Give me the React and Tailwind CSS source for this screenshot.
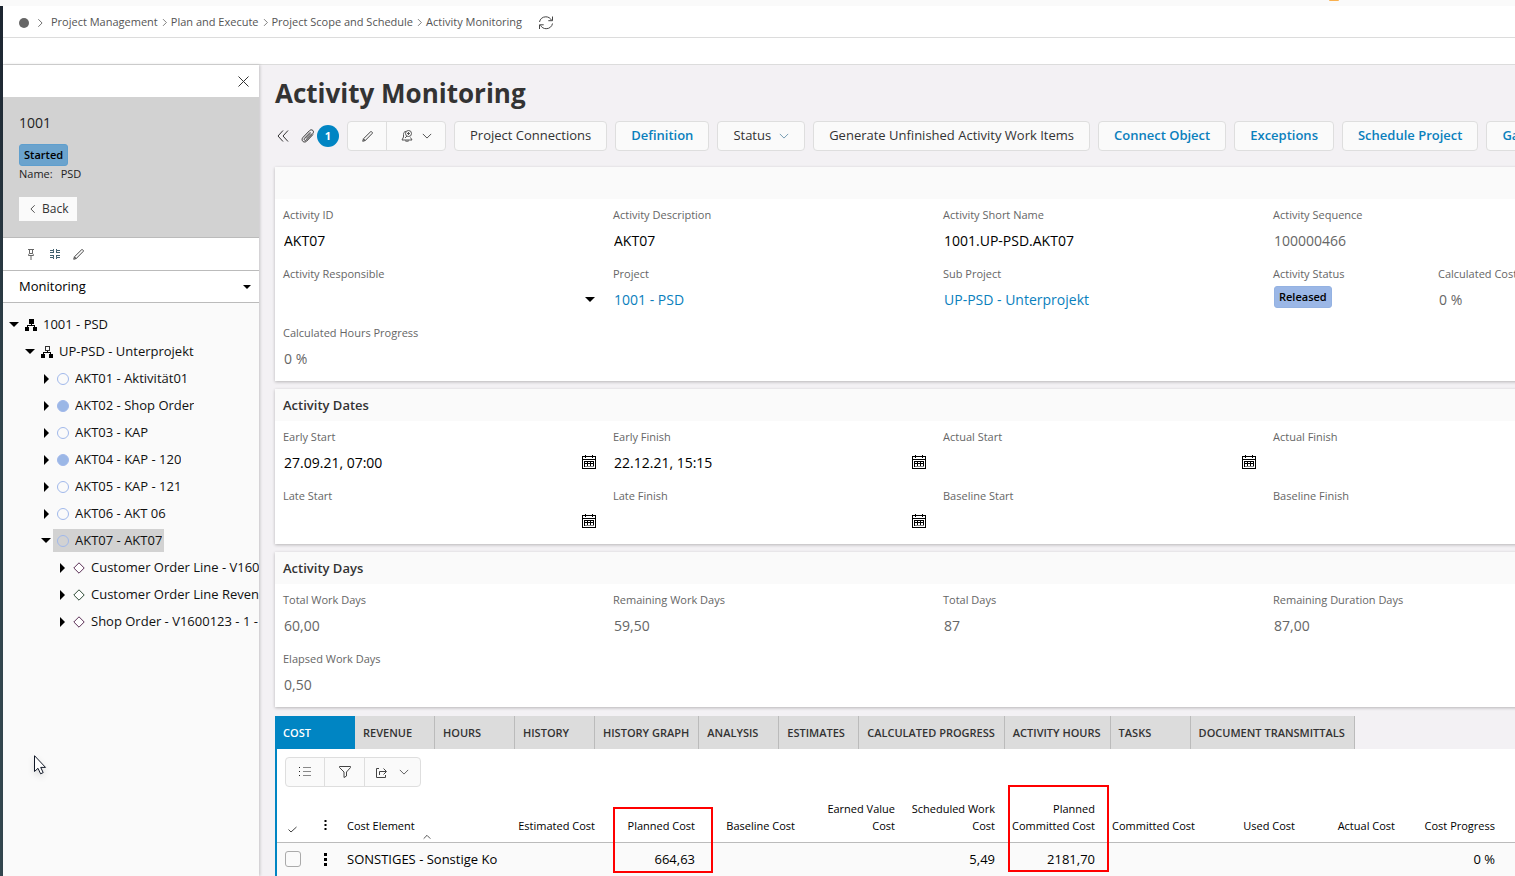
import React, { useState } from "react";

const TREE = [
  { level: 0, icon: "root", label: "1001 - PSD", open: true },
  { level: 1, icon: "sub", label: "UP-PSD - Unterprojekt", open: true },
  { level: 2, icon: "circle", label: "AKT01 - Aktivität01" },
  { level: 2, icon: "dot", label: "AKT02 - Shop Order" },
  { level: 2, icon: "circle", label: "AKT03 - KAP" },
  { level: 2, icon: "dot", label: "AKT04 - KAP - 120" },
  { level: 2, icon: "circle", label: "AKT05 - KAP - 121" },
  { level: 2, icon: "circle", label: "AKT06 - AKT 06" },
  { level: 2, icon: "circle", label: "AKT07 - AKT07", open: true },
  { level: 3, icon: "purple", label: "Customer Order Line - V1600" },
  { level: 3, icon: "green", label: "Customer Order Line Revenue" },
  { level: 3, icon: "purple", label: "Shop Order - V1600123 - 1 -" },
];

const INDENT = ["pl-[6px]", "pl-[22px]", "pl-[38px]", "pl-[54px]"];

const TABS = [
  "COST",
  "REVENUE",
  "HOURS",
  "HISTORY",
  "HISTORY GRAPH",
  "ANALYSIS",
  "ESTIMATES",
  "CALCULATED PROGRESS",
  "ACTIVITY HOURS",
  "TASKS",
  "DOCUMENT TRANSMITTALS",
];

const COLUMNS = [
  { name: "Estimated Cost", value: "" },
  { name: "Planned Cost", value: "664,63", mark: "top-5 h-[66px] left-2 w-[100px]" },
  { name: "Baseline Cost", value: "" },
  { name: "Earned Value Cost", value: "" },
  { name: "Scheduled Work Cost", value: "5,49" },
  { name: "Planned Committed Cost", value: "2181,70", mark: "-top-[2px] h-[87px] left-[3px] w-[101px]" },
  { name: "Committed Cost", value: "" },
  { name: "Used Cost", value: "" },
  { name: "Actual Cost", value: "" },
  { name: "Cost Progress", value: "0 %" },
];

function Chevron({ d, className }) {
  return (
    <svg className={className} viewBox="0 0 12 12" fill="none" stroke="currentColor" aria-hidden="true">
      <path d={d} />
    </svg>
  );
}

const DOWN = "M1 3.5l5 5 5-5";
const LEFT = "M8 1.5L3.5 6 8 10.500";
const RIGHT = "M4 1.500L8.500 6 4 10.500";
const UP = "M1 8.500l5-5 5 5";

function Caret({ open }) {
  return (
    <svg className="w-[10px] h-[10px] shrink-0" viewBox="0 0 10 10" fill="black" aria-hidden="true">
      {open ? <path d="M0 2h10L5 7z" /> : <path d="M3 0v10l5-5z" />}
    </svg>
  );
}

function Pencil({ className }) {
  return (
    <svg className={className} viewBox="0 0 12 12" fill="none" stroke="currentColor" aria-hidden="true">
      <path d="M.8 11.200l.8-2.700L9.300.9c.4-.4 1-.4 1.300 0l.5.5c.4.400.4.900 0 1.300L3.500 10.400zM1.600 8.500l1.900 1.900" />
    </svg>
  );
}

function CalendarIcon() {
  return (
    <svg className="w-[14px] h-[14px]" viewBox="0 0 14 14" fill="none" stroke="black" shapeRendering="crispEdges" aria-hidden="true">
      <path d="M.5 1.500h13v12H.5zM1 4.500h12M3.500 0v3M10.500 0v3M2.500 6.500h9v4.500h-9zM2 8.500h10M5.500 6v5M8.500 6v5" />
      <path d="M2.500 11.500h9" stroke="#888" />
    </svg>
  );
}

function TreeIcon({ type }) {
  if (type === "root" || type === "sub") {
    return (
      <svg className="w-3 h-3 shrink-0" viewBox="0 0 12 12" fill="black" shapeRendering="crispEdges" aria-hidden="true">
        {type === "root" ? <path d="M4 0h5v5H4z" /> : <path d="M4.500.5h4v4h-4z" fill="none" stroke="#333" />}
        <path d="M0 8h4v4H0zM8 8h4v4H8zM6 5h1v2H6zM2 6h8v1H2zM2 7h1v1H2zM9 7h1v1H9z" />
      </svg>
    );
  }
  if (type === "circle" || type === "dot") {
    return (
      <svg className="w-3 h-3 shrink-0" viewBox="0 0 12 12" stroke="#a0b8ea" fill={type === "dot" ? "#9bb7e6" : "none"} aria-hidden="true">
        <circle cx="6" cy="6" r="5.500" />
      </svg>
    );
  }
  return (
    <svg className="w-3 h-3 shrink-0" viewBox="0 0 12 12" fill="white" stroke={type === "green" ? "#2d4a35" : "#5b2f56"} aria-hidden="true">
      <path d="M6 .8L11.200 6 6 11.200.8 6z" />
    </svg>
  );
}

function Field({ label, id, children, half }) {
  return (
    <div className={`${half ? "" : "col-span-2"} h-[59px] px-2 pt-2`}>
      <label htmlFor={id} className="block h-4 leading-4 text-[11px] text-[#666] whitespace-nowrap">
        {label}
      </label>
      <div className="mt-1 h-[26px] pl-px flex items-center text-[14px] text-[#666]">{children}</div>
    </div>
  );
}

function TextField({ label, id, value = "", calendar }) {
  return (
    <Field label={label} id={id}>
      <input id={id} defaultValue={value} className="flex-1 min-w-0 h-6 bg-transparent text-black outline-none" />
      {calendar && (
        <button type="button" aria-label={`Pick ${label}`} className="mr-px">
          <CalendarIcon />
        </button>
      )}
    </Field>
  );
}

function ReadField({ label, id, value, half }) {
  return (
    <Field label={label} id={id} half={half}>
      <output id={id}>{value}</output>
    </Field>
  );
}

function Card({ title, children }) {
  return (
    <section className="bg-white shadow-[0_1px_3px_rgba(0,0,0,0.25)]">
      <h2 className="h-8 px-2 bg-[#fafafa] text-[13px] leading-8 font-semibold text-[#333]">{title}</h2>
      <div className="grid grid-cols-[repeat(8,165px)] pb-[5px]">{children}</div>
    </section>
  );
}

function ToolButton({ children, link }) {
  return (
    <button
      type="button"
      className={`h-[30px] px-[15px] shrink-0 flex items-center gap-2 rounded border border-[#dedede] bg-[#fafafa] text-[13px] whitespace-nowrap ${
        link ? "font-semibold text-[#0a80bd]" : "text-[#333]"
      }`}
    >
      {children}
    </button>
  );
}

function Sidebar() {
  const [selected, setSelected] = useState("AKT07 - AKT07");

  return (
    <aside className="relative z-10 w-64 shrink-0 overflow-hidden bg-[#fafafa] shadow-[1px_0_3px_rgba(0,0,0,0.2)]">
      <div className="h-8 bg-white flex items-center justify-end pr-[10px]">
        <button type="button" aria-label="Close">
          <svg className="w-[11px] h-[11px]" viewBox="0 0 11 11" stroke="#333" aria-hidden="true">
            <path d="M.5.5l10 10M10.500.5l-10 10" />
          </svg>
        </button>
      </div>
      <div className="bg-[#d2d2d2] border-b border-[#bbb] px-4 py-4 text-[#222]">
        <div className="h-5 leading-5 text-[14px]">1001</div>
        <div className="mt-[11px] flex">
          <span className="h-[22px] px-1 rounded-[3px] border border-[#5f9fce] bg-[#6ba3cd] text-[11px] leading-5 font-semibold text-black">
            Started
          </span>
        </div>
        <div className="h-4 leading-4 text-[11px] flex gap-2">
          <span>Name:</span>
          <span>PSD</span>
        </div>
        <button type="button" className="mt-[15px] h-6 px-[9px] bg-[#fafafa] flex items-center gap-1 text-[12px] text-[#333]">
          <Chevron d={LEFT} className="w-[10px] h-[10px]" />
          Back
        </button>
      </div>
      <div className="h-[33px] bg-white border-b border-[#bbb] flex items-center gap-3 pl-[22px] text-[#333]">
        <button type="button" aria-label="Pin">
          <svg className="w-3 h-3" viewBox="0 0 12 12" fill="none" stroke="#666" aria-hidden="true">
            <path d="M3 1.500h6M4.500 1.500v4M7.500 1.500v4M3.500 7.500c0-1 .5-2 1-2h3c.5 0 1 1 1 2zM6 7.500V12" />
          </svg>
        </button>
        <button type="button" aria-label="Collapse">
          <svg className="w-3 h-3" viewBox="0 0 12 12" fill="none" stroke="#41606f" aria-hidden="true">
            <path d="M1 2.500h3.500V5M11 2.500H7.500V5M1 9.500h3.500V7M11 9.500H7.500V7M4.500 2.500V1M7.500 2.500V1M4.500 9.500V11M7.500 9.500V11M1 4.500h3.500M7.500 4.500H11M1 7.500h3.500M7.500 7.500H11" />
          </svg>
        </button>
        <button type="button" aria-label="Edit">
          <Pencil className="w-[11px] h-[11px]" />
        </button>
      </div>
      <div className="relative h-8 bg-white border-b border-[#bbb]">
        <select aria-label="View" className="w-full h-full pl-4 appearance-none bg-transparent text-[13px] text-black outline-none">
          <option>Monitoring</option>
        </select>
        <svg className="absolute right-2 top-[13px] w-2 h-[6px] pointer-events-none" viewBox="0 0 8 6" aria-hidden="true">
          <path d="M0 1h8L4 5z" />
        </svg>
      </div>
      <ul className="pt-2">
        {TREE.map((node) => (
          <li key={node.label} className={`${INDENT[node.level]} h-[27px] flex items-center gap-[2px]`}>
            <Caret open={node.open} />
            <button
              type="button"
              onClick={() => setSelected(node.label)}
              className={`h-[23px] min-w-0 pl-1 flex items-center gap-[6px] text-[13px] text-[#111] ${
                selected === node.label ? "bg-[#d2d2d2] pr-[2px]" : ""
              }`}
            >
              <TreeIcon type={node.icon} />
              <span className="min-w-0 overflow-hidden whitespace-nowrap">{node.label}</span>
            </button>
          </li>
        ))}
      </ul>
      {/* mouse pointer */}
      <svg className="absolute left-[31px] top-[690px] w-[14px] h-5 drop-shadow-md" viewBox="0 0 14 20" fill="white" stroke="#111827" aria-hidden="true">
        <path d="M.5.7v15.800l3.500-3.200 2.600 5.500 2.600-1.200-2.500-5.200h4.800z" />
      </svg>
    </aside>
  );
}

function Toolbar() {
  return (
    <div className="mt-[10px] flex items-center gap-2 text-[#333]">
      <div className="w-16 shrink-0 flex items-center">
        <button type="button" aria-label="Collapse header" className="ml-[2px]">
          <svg className="w-3 h-3" viewBox="0 0 12 12" fill="none" stroke="currentColor" aria-hidden="true">
            <path d="M6 .5L1 6l5 5.500M11 .5L6 6l5 5.500" />
          </svg>
        </button>
        <button type="button" aria-label="Attachments" className="ml-3 flex items-center gap-[2px]">
          <svg className="w-[14px] h-[14px]" viewBox="0 0 14 14" fill="none" stroke="currentColor" aria-hidden="true">
            <path d="M12 5.500l-6.300 6.600c-1.100 1.100-2.800 1.200-3.900.2-1-1.100-.9-2.700.1-3.800L8.600 1.600c.9-.9 2.300-1 3.200-.2.9.9.8 2.200 0 3.100L5.400 11c-.6.6-1.400.6-1.900.1s-.4-1.300.1-1.900l5.800-6" />
            <path d="M5 9.600l5-5.200" />
          </svg>
          <span className="size-[22px] rounded-full bg-[#0085c3] text-white text-[11px] leading-[22px] font-bold text-center">1</span>
        </button>
      </div>
      <div className="h-[30px] shrink-0 flex rounded border border-[#dedede] bg-[#fafafa]">
        <button type="button" aria-label="Edit" className="w-[39px] flex items-center justify-center border-r border-[#dedede]">
          <Pencil className="w-[11px] h-[11px]" />
        </button>
        <button type="button" aria-label="Notifications" className="w-[58px] flex items-center justify-center gap-[9px]">
          <svg className="w-3 h-3" viewBox="0 0 12 12" fill="none" stroke="#555" aria-hidden="true">
            <path d="M5 1.500c-2 0-2.500 1.500-2.500 3v2.500L1 10h10L9.500 7.500M4 10.500c.5 1 3.500 1 4 0" />
            <circle cx="7.500" cy="3.500" r="3" />
            <path d="M7.500 2v3M6 3.500h3M4 8l2-2" />
          </svg>
          <Chevron d={DOWN} className="w-[10px] h-[10px]" />
        </button>
      </div>
      <ToolButton>Project Connections</ToolButton>
      <ToolButton link>Definition</ToolButton>
      <ToolButton>
        Status
        <Chevron d={DOWN} className="w-[10px] h-[10px] text-[#5b8aa5]" />
      </ToolButton>
      <ToolButton>Generate Unfinished Activity Work Items</ToolButton>
      <ToolButton link>Connect Object</ToolButton>
      <ToolButton link>Exceptions</ToolButton>
      <ToolButton link>Schedule Project</ToolButton>
      <ToolButton link>Gantt</ToolButton>
    </div>
  );
}

function CostTable() {
  return (
    <div className="flex-1 bg-white border-l-2 border-[#0085c3]">
      <div className="pt-2 pl-2">
        <div className="flex w-fit h-[30px] rounded border border-[#dedede] bg-[#fafafa] text-[#444]">
          <button type="button" aria-label="List view" className="w-[39px] flex items-center justify-center border-r border-[#dedede]">
            <svg className="w-3 h-3" viewBox="0 0 12 12" shapeRendering="crispEdges" aria-hidden="true">
              <path d="M0 1h1v1H0zM0 5h1v1H0zM0 9h1v1H0z" fill="#222" />
              <path d="M4 1.500h8M4 5.500h8M4 9.500h8" stroke="#888" />
            </svg>
          </button>
          <button type="button" aria-label="Filter" className="w-10 flex items-center justify-center border-r border-[#dedede]">
            <svg className="w-3 h-3" viewBox="0 0 12 12" fill="none" stroke="currentColor" aria-hidden="true">
              <path d="M.5.5h11v1L7.500 6v4L5 11.500V6L.5 1.500z" />
            </svg>
          </button>
          <button type="button" aria-label="Export" className="w-[55px] flex items-center justify-center gap-3">
            <svg className="w-[11px] h-[11px]" viewBox="0 0 11 11" fill="none" stroke="currentColor" aria-hidden="true">
              <path d="M3 1.500H.5v9h9V8M3.500 8V4.500H10M7.500 1.500l3 3-3 3" />
            </svg>
            <Chevron d={DOWN} className="w-[10px] h-[10px]" />
          </button>
        </div>
      </div>
      <table className="w-full table-fixed text-black">
        <colgroup>
          <col className="w-8" />
          <col className="w-8" />
          <col className="w-[164px]" />
          {COLUMNS.map((col) => (
            <col key={col.name} className="w-[100px]" />
          ))}
          <col />
        </colgroup>
        <thead>
          <tr className="h-[55px] border-b border-[#bbb] text-[11px] leading-[17px]">
            <th className="align-bottom pl-[11px] pb-[9px]">
              <svg className="w-[9px] h-[9px]" viewBox="0 0 9 9" fill="none" stroke="#444" aria-label="Select">
                <path d="M.5 5.500L3 8l5.500-5" />
              </svg>
            </th>
            <th className="align-bottom pb-3">
              <svg className="mx-auto w-[3px] h-[10px]" viewBox="0 0 3 10" aria-label="Actions">
                <path d="M.5 0h2v2h-2zM.5 4h2v2h-2zM.5 8h2v2h-2z" />
              </svg>
            </th>
            <th className="relative align-bottom text-left font-normal pl-[6px] pb-2">
              Cost Element
              <Chevron d={UP} className="absolute left-[82px] bottom-px w-2 h-2" />
            </th>
            {COLUMNS.map((col) => (
              <th key={col.name} className="relative align-bottom text-right font-normal pl-1 pr-[10px] pb-2">
                {col.name}
                {col.mark && <span className={`absolute z-10 border-2 border-[#f00] pointer-events-none ${col.mark}`} />}
              </th>
            ))}
            <th />
          </tr>
        </thead>
        <tbody>
          <tr className="h-[34px] bg-[#fafafa] text-[13px]">
            <td className="pl-2">
              <input
                type="checkbox"
                aria-label="Select SONSTIGES"
                className="block size-4 appearance-none rounded-[3px] border border-[#aaa] bg-[#fafafa]"
              />
            </td>
            <td>
              <button type="button" aria-label="Row actions" className="block mx-auto">
                <svg className="w-[3px] h-[13px]" viewBox="0 0 3 13" aria-hidden="true">
                  <path d="M0 0h3v3H0zM0 5h3v3H0zM0 10h3v3H0z" />
                </svg>
              </button>
            </td>
            <td className="pl-[6px] whitespace-nowrap">SONSTIGES - Sonstige Ko</td>
            {COLUMNS.map((col) => (
              <td key={col.name} className="text-right pr-[10px]">
                {col.value}
              </td>
            ))}
            <td />
          </tr>
        </tbody>
      </table>
    </div>
  );
}

export default function App() {
  const [tab, setTab] = useState("COST");

  return (
    <div className="h-screen overflow-hidden flex flex-col bg-[#f3f1f4] font-['Open_Sans',sans-serif]">
      <div className="h-[6px] shrink-0 bg-[#fafafa] flex justify-end overflow-hidden pr-[176px]">
        <span className="w-[10px] h-px rounded-b bg-[#f9b04f]" />
      </div>
      <div className="flex-1 min-h-0 flex">
        <div className="w-[3px] shrink-0 bg-linear-to-b from-[#1c2530] to-[#33474f] to-50%" />
        <div className="flex-1 min-w-0 flex flex-col">
          <nav className="h-8 shrink-0 bg-white border-b border-[#dcdcdc] flex items-center pl-4 pt-[2px] text-[11px] text-[#555]">
            <span className="size-[10px] rounded-full bg-[#666]" />
            <Chevron d={RIGHT} className="w-[10px] h-[10px] mx-[6px]" />
            {["Project Management", "Plan and Execute", "Project Scope and Schedule"].map((item) => (
              <React.Fragment key={item}>
                <a href="#">{item}</a>
                <Chevron d={RIGHT} className="w-[9px] h-[9px] mx-[2px]" />
              </React.Fragment>
            ))}
            <a href="#">Activity Monitoring</a>
            <button type="button" aria-label="Refresh" className="ml-4">
              <svg className="w-4 h-4" viewBox="0 0 16 16" fill="none" stroke="#444" aria-hidden="true">
                <path d="M1.500 7C2 4 4.500 1.800 7.800 1.800c2.500 0 4.500 1.200 5.700 3.400M14.500 1.500v4.200h-4.200M14.500 8.500c-.5 3-3 5.200-6.300 5.200-2.500 0-4.500-1.200-5.700-3.400M1.500 14v-4.200h4.200" />
              </svg>
            </button>
          </nav>
          <div className="h-[27px] shrink-0 bg-white border-b border-[#dcdcdc]" />
          <div className="flex-1 min-h-0 flex">
            <Sidebar />
            <main className="flex-1 min-w-0 overflow-hidden pl-4 pt-[10px] flex flex-col">
              <h1 className="h-9 leading-9 text-[26px] font-bold text-[#333]">Activity Monitoring</h1>
              <Toolbar />
              <div className="mt-4 grid gap-2">
                <Card>
                  <TextField label="Activity ID" id="activity-id" value="AKT07" />
                  <TextField label="Activity Description" id="description" value="AKT07" />
                  <TextField label="Activity Short Name" id="short-name" value="1001.UP-PSD.AKT07" />
                  <ReadField label="Activity Sequence" id="sequence" value="100000466" />
                  <Field label="Activity Responsible" id="responsible">
                    <select id="responsible" className="flex-1 h-6 appearance-none bg-transparent outline-none" />
                    <svg className="w-[10px] h-[10px] mr-[2px]" viewBox="0 0 10 10" aria-hidden="true">
                      <path d="M0 3h10L5 8z" />
                    </svg>
                  </Field>
                  <Field label="Project">
                    <a href="#" className="text-[#0a80bd]">1001 - PSD</a>
                  </Field>
                  <Field label="Sub Project">
                    <a href="#" className="text-[#0a80bd]">UP-PSD - Unterprojekt</a>
                  </Field>
                  <Field label="Activity Status" half>
                    <span className="self-start h-[22px] px-1 rounded-[3px] border border-[#94b2e2] bg-[#9bb7e6] text-[11px] leading-5 font-semibold text-black">
                      Released
                    </span>
                  </Field>
                  <ReadField label="Calculated Cost Progress" id="cost-progress" value="0 %" half />
                  <ReadField label="Calculated Hours Progress" id="hours-progress" value="0 %" />
                </Card>
                <Card title="Activity Dates">
                  <TextField label="Early Start" id="early-start" value="27.09.21, 07:00" calendar />
                  <TextField label="Early Finish" id="early-finish" value="22.12.21, 15:15" calendar />
                  <TextField label="Actual Start" id="actual-start" calendar />
                  <TextField label="Actual Finish" id="actual-finish" calendar />
                  <TextField label="Late Start" id="late-start" calendar />
                  <TextField label="Late Finish" id="late-finish" calendar />
                  <ReadField label="Baseline Start" id="baseline-start" />
                  <ReadField label="Baseline Finish" id="baseline-finish" />
                </Card>
                <Card title="Activity Days">
                  <ReadField label="Total Work Days" id="total-work-days" value="60,00" />
                  <ReadField label="Remaining Work Days" id="remaining-work-days" value="59,50" />
                  <ReadField label="Total Days" id="total-days" value="87" />
                  <ReadField label="Remaining Duration Days" id="remaining-duration" value="87,00" />
                  <ReadField label="Elapsed Work Days" id="elapsed-work-days" value="0,50" />
                </Card>
              </div>
              <div className="mt-[9px] flex shrink-0">
                {TABS.map((name) => (
                  <button
                    key={name}
                    type="button"
                    onClick={() => setTab(name)}
                    className={`h-[33px] min-w-20 pl-2 pr-[9px] pt-px shrink-0 text-left text-[11px] font-semibold whitespace-nowrap ${
                      tab === name ? "bg-[#0085c3] text-white" : "bg-[#dcdcdc] text-[#333] border-r border-[#bbb]"
                    }`}
                  >
                    {name}
                  </button>
                ))}
              </div>
              <CostTable />
            </main>
          </div>
        </div>
      </div>
    </div>
  );
}
